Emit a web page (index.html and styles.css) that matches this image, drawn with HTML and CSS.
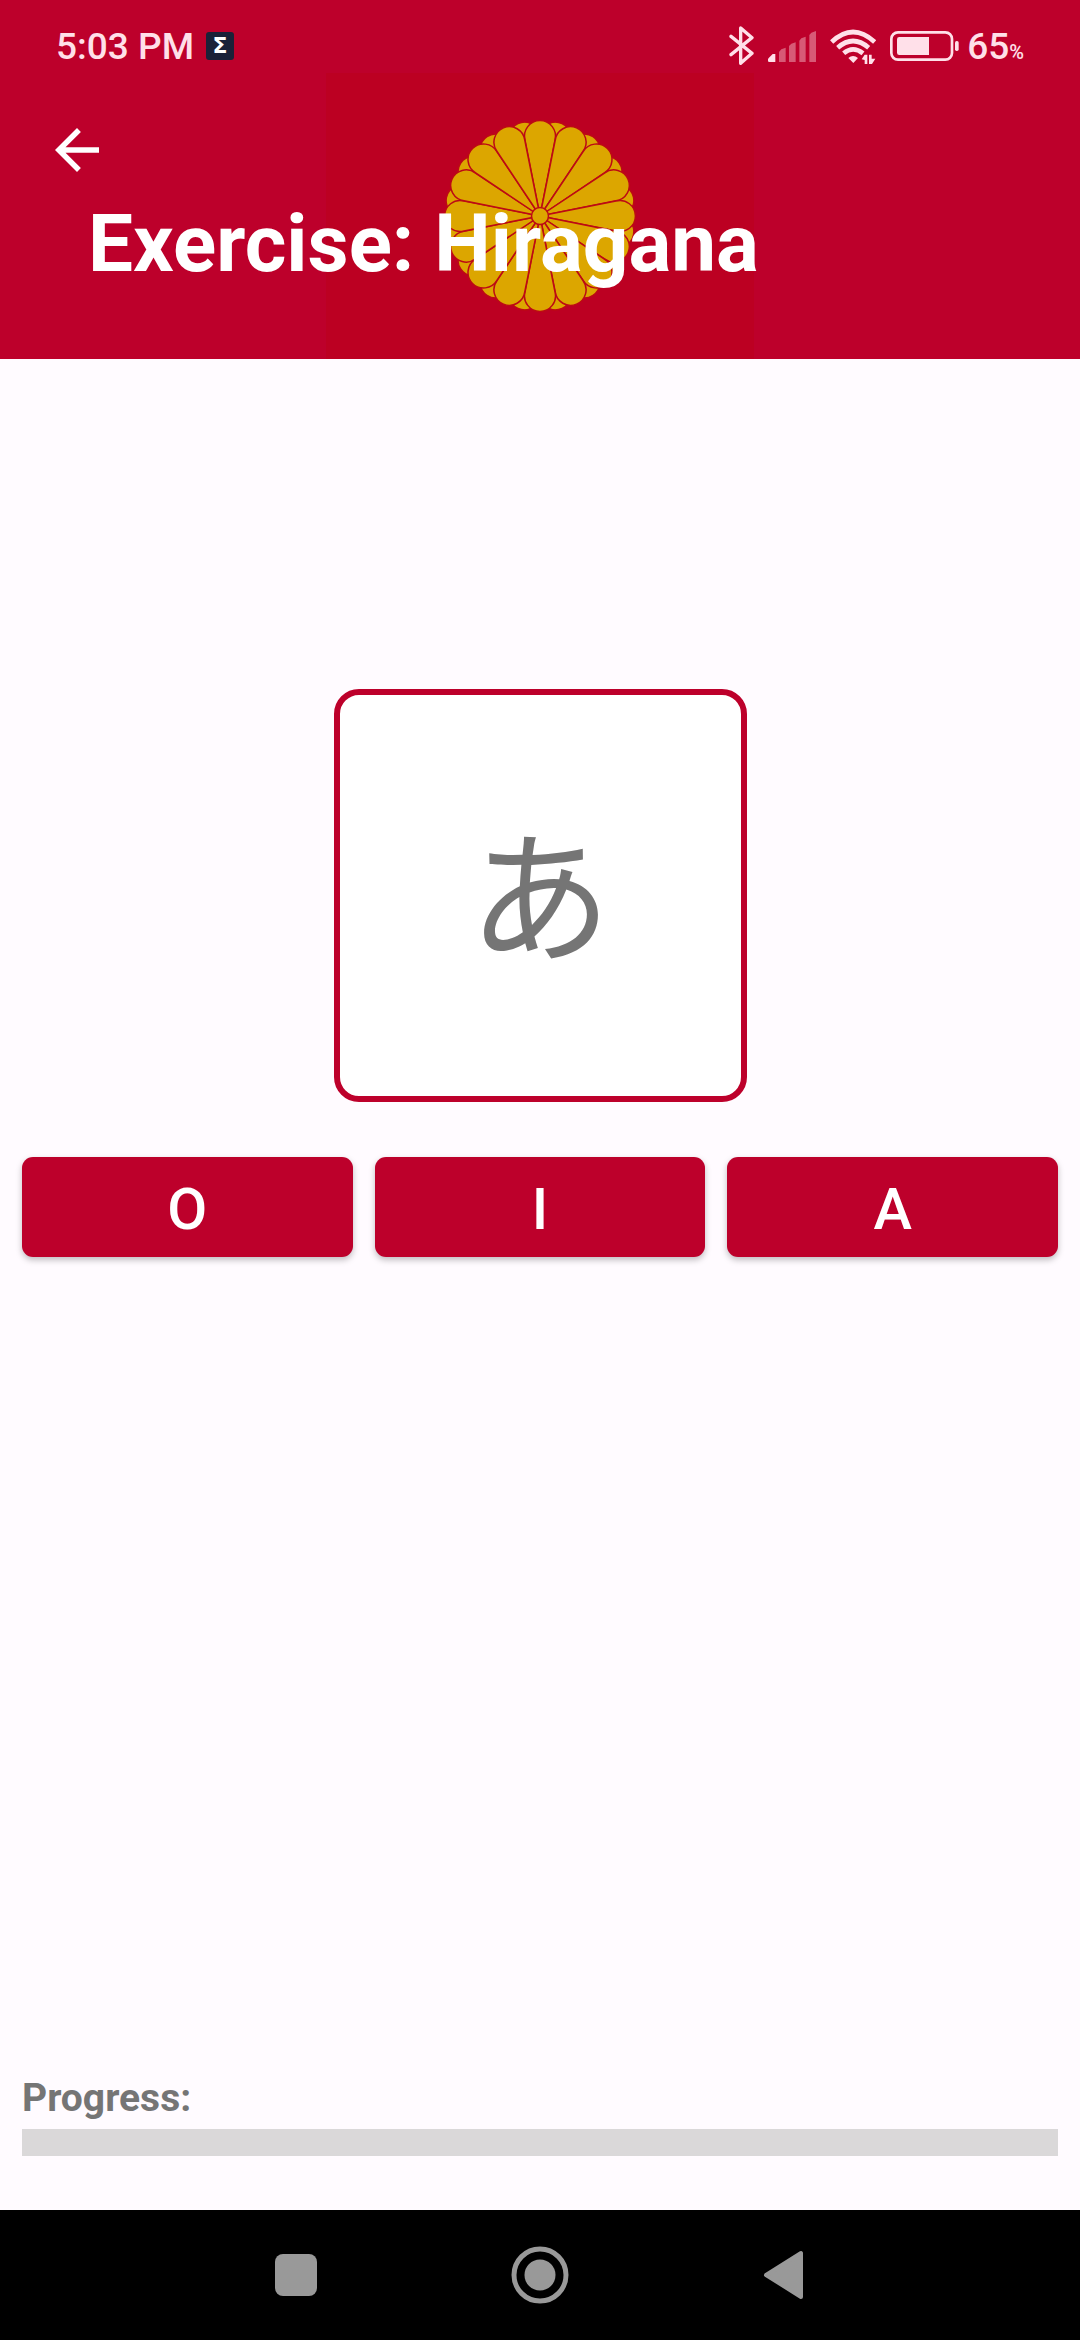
FILE: index.html
```html
<!DOCTYPE html>
<html lang="en">
<head>
<meta charset="utf-8">
<meta name="viewport" content="width=device-width, initial-scale=1">
<title>Exercise: Hiragana</title>
<link rel="stylesheet" href="styles.css">
</head>
<body>
<div class="screen">
  <header class="header">
    <svg class="emblem" viewBox="-214 -143 428 286" aria-hidden="true">
      <defs>
        <path id="petal" d="M0 0L-15 -76A15.500 15.500 0 1 1 15 -76Z"/>
        <g id="quarter">
          <use href="#petal"/>
          <use href="#petal" transform="rotate(22.5)"/>
          <use href="#petal" transform="rotate(45)"/>
          <use href="#petal" transform="rotate(67.5)"/>
        </g>
        <g id="ring">
          <use href="#quarter"/>
          <use href="#quarter" transform="rotate(90)"/>
          <use href="#quarter" transform="rotate(180)"/>
          <use href="#quarter" transform="rotate(270)"/>
        </g>
      </defs>
      <rect class="emblem-field" x="-214" y="-143" width="428" height="286"/>
      <g class="emblem-flower">
        <use href="#ring" transform="rotate(11.25)"/>
        <use href="#ring"/>
        <circle r="8.500"/>
      </g>
    </svg>
    <div class="status">
      <time class="clock">5:03 PM</time>
      <span class="app-badge">Σ</span>
      <div class="indicators">
        <svg class="bluetooth" viewBox="91 78 75 120" role="img" aria-label="Bluetooth">
          <path d="M97 109L160 160L126 190V84L160 113L97 164" fill="none" stroke="currentColor" stroke-width="10" stroke-linejoin="round" stroke-linecap="round"/>
        </svg>
        <svg class="signal" viewBox="207 78 144 120" role="img" aria-label="Signal">
          <path d="M207 182V176L221 162H229V186H211Q207 186 207 182Z" fill="currentColor"/>
          <path d="M240 186V156L247 148L260 143V186ZM270 186V138L277 131L290 127V186ZM301 186V122L307 115L320 110V186ZM331 186V105L337 98L351 93V186Z" fill="currentColor" opacity=".4"/>
        </svg>
        <svg class="wifi" viewBox="389 78 138 120" role="img" aria-label="Wi-Fi">
          <g fill="none" stroke="currentColor" stroke-width="14">
            <path d="M394 126Q458 66 523 126"/>
            <path d="M412 143Q458 103 505 143"/>
            <path d="M430 160Q458 136 488 160"/>
          </g>
          <path d="M444 174Q458 162 473 174L459 189ZM484 178L493 164H501V192H493V180ZM506 164H514V176H525L515 192H506Z" fill="currentColor"/>
        </svg>
        <svg class="battery" viewBox="573 78 207 120" role="img" aria-label="Battery">
          <rect x="577" y="97" width="182" height="82" rx="20" fill="none" stroke="currentColor" stroke-width="8"/>
          <path d="M601 111H690V165H601Q594 165 594 158V118Q594 111 601 111Z" fill="currentColor"/>
          <rect x="768" y="123" width="11" height="30" rx="5" fill="currentColor"/>
        </svg>
        <span class="charge">65<span class="percent">%</span></span>
      </div>
    </div>
    <div class="toolbar">
      <button class="back" type="button" aria-label="Back">
        <svg viewBox="0 0 24 24"><path d="M20 11H7.830l5.590-5.590L12 4l-8 8 8 8 1.410-1.410L7.830 13H20z" fill="currentColor"/></svg>
      </button>
      <h1 class="title">Exercise: Hiragana</h1>
    </div>
  </header>

  <main class="exercise">
    <div class="card" lang="ja">あ</div>
    <div class="answers">
      <button class="answer" type="button">O</button>
      <button class="answer" type="button">I</button>
      <button class="answer" type="button">A</button>
    </div>
    <div class="progress">
      <label class="progress-label" for="progress">Progress:</label>
      <progress class="progress-bar" id="progress" value="0" max="100"></progress>
    </div>
  </main>

  <nav class="system-nav" aria-label="System">
    <button class="nav-button" type="button" aria-label="Recent apps">
      <svg viewBox="0 0 60 60"><rect x="9" y="9" width="42" height="42" rx="8" fill="currentColor"/></svg>
    </button>
    <button class="nav-button" type="button" aria-label="Home">
      <svg viewBox="0 0 60 60"><circle cx="30" cy="30" r="26" fill="none" stroke="currentColor" stroke-width="5"/><circle cx="30" cy="30" r="15.500" fill="currentColor"/></svg>
    </button>
    <button class="nav-button" type="button" aria-label="Back">
      <svg viewBox="0 0 60 60"><path d="M12 30L47 8V52Z" fill="currentColor" stroke="currentColor" stroke-width="4" stroke-linejoin="round"/></svg>
    </button>
  </nav>
</div>
</body>
</html>
```
FILE: styles.css
```css
:root {
  --crimson: #bd002b;
  --surface: #fffbff;
  --grey: #757575;
}

* {
  box-sizing: border-box;
}

body {
  margin: 0;
  font-family: Roboto, "Noto Sans CJK JP", sans-serif;
  background: var(--surface);
}

button {
  margin: 0;
  padding: 0;
  border: 0;
  background: none;
  font: inherit;
  color: inherit;
}

svg {
  display: block;
}

.screen {
  display: flex;
  flex-direction: column;
  min-height: 100vh;
}

.header {
  position: relative;
  background: var(--crimson);
  color: #fff;
}

/* Flag artwork sits behind the status bar and title */
.emblem {
  position: absolute;
  bottom: 0;
  left: 50%;
  width: 428px;
  height: 286px;
  margin-left: -214px;
}

.emblem-field {
  fill: #bc0022;
}

.emblem-flower {
  fill: #dca600;
  stroke: #bc0a14;
  stroke-width: 1.5;
}

.status {
  position: relative;
  display: flex;
  align-items: center;
  height: 92px;
  padding: 0 56px;
  font-size: 37px;
  font-weight: 500;
  line-height: 44px;
  color: #ffe0e9;
}

.clock,
.charge {
  padding-top: 2px;
}

.app-badge {
  width: 28px;
  height: 28px;
  margin-left: 12px;
  border-radius: 3px;
  background: #1b2138;
  color: #fff;
  font: bold 22px/28px "DejaVu Sans", sans-serif;
  text-align: center;
}

.indicators {
  display: flex;
  align-items: center;
  gap: 14px;
  margin-left: auto;
}

.indicators svg {
  height: 40px;
}

.bluetooth {
  width: 25px;
}

.signal {
  width: 48px;
}

.wifi {
  width: 46px;
}

.battery {
  width: 69px;
}

.charge {
  margin-left: -6px;
}

.percent {
  font-size: 20px;
  line-height: 20px;
}

.toolbar {
  position: relative;
  padding: 25px 44px 68px;
}

.back {
  display: block;
  width: 66px;
  height: 66px;
}

.title {
  margin: 14px 0 0 44px;
  font-size: 80px;
  font-weight: 700;
  line-height: 94px;
}

.exercise {
  flex: 1;
  display: flex;
  flex-direction: column;
  padding: 330px 22px 54px;
}

.card {
  display: grid;
  place-items: center;
  align-self: center;
  width: 413px;
  height: 413px;
  padding-top: 12px;
  border: 6px solid var(--crimson);
  border-radius: 25px;
  background: #fff;
  color: var(--grey);
  font-size: 143px;
  line-height: 200px;
}

.answers {
  display: grid;
  grid-template-columns: repeat(3, 1fr);
  gap: 22px;
  margin-top: 55px;
}

.answer {
  height: 100px;
  padding-top: 4px;
  border-radius: 11px;
  background: var(--crimson);
  box-shadow: 0 3px 6px rgba(0, 0, 0, 0.25);
  color: #fff;
  font-size: 58px;
  font-weight: 500;
  line-height: 66px;
}

.progress {
  display: flex;
  flex-direction: column;
  gap: 8px;
  margin-top: auto;
}

.progress-label {
  color: var(--grey);
  font-size: 39px;
  font-weight: 700;
  line-height: 46px;
}

.progress-bar {
  appearance: none;
  display: block;
  width: 100%;
  height: 27px;
  border: 0;
  background: #dad8d9;
}

.progress-bar::-webkit-progress-bar {
  background: #dad8d9;
}

.progress-bar::-webkit-progress-value {
  background: var(--crimson);
}

.system-nav {
  display: flex;
  justify-content: center;
  height: 130px;
  background: #000;
  color: #999;
}

.nav-button {
  display: grid;
  place-items: center;
  width: 244px;
}

.nav-button svg {
  width: 60px;
  height: 60px;
}
```
